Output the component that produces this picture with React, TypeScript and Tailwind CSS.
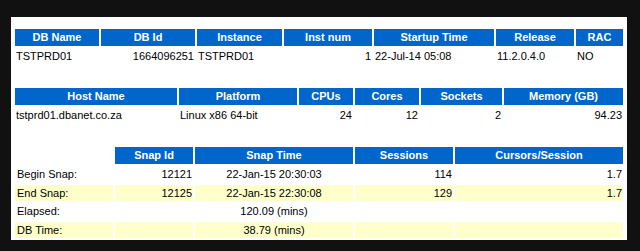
import React from 'react';

type Align = 'l' | 'r' | 'c';

const alignClass: Record<Align, string> = {
  l: 'justify-start pl-[1px]',
  r: 'justify-end pr-[1px]',
  c: 'justify-center',
};

// Blue AWR-style column heading
const Th = ({ children }: { children?: React.ReactNode }) => (
  <div className="flex items-center justify-center bg-[#0066cc] text-white font-bold pb-[1px] whitespace-nowrap">
    {children}
  </div>
);

const Td = ({ children, align = 'l', alt = false }: { children?: React.ReactNode; align?: Align; alt?: boolean }) => (
  <div className={`flex items-center whitespace-nowrap text-black ${alignClass[align]} ${alt ? 'bg-[#ffffcc]' : 'bg-white'}`}>
    {children}
  </div>
);

const snapRows = [
  { label: 'Begin Snap:', id: '12121', time: '22-Jan-15 20:30:03', sessions: '114', cursors: '1.7' },
  { label: 'End Snap:', id: '12125', time: '22-Jan-15 22:30:08', sessions: '129', cursors: '1.7' },
  { label: 'Elapsed:', id: '', time: '120.09 (mins)', sessions: '', cursors: '' },
  { label: 'DB Time:', id: '', time: '38.79 (mins)', sessions: '', cursors: '' },
];

export default function App() {
  return (
    <div className="w-[640px] h-[251px] bg-[#111111] pt-[17px] pl-[11px] overflow-hidden">
      <div className="w-[616px] h-[223px] bg-white pt-[12px] pl-[4px] font-['Liberation_Sans',Arial,sans-serif] text-[11px] leading-none">
        {/* Database */}
        <div className="grid grid-cols-[84px_94px_85px_88px_120px_78px_47px] grid-rows-[17px_17px] gap-[2px]">
          <Th>DB Name</Th>
          <Th>DB Id</Th>
          <Th>Instance</Th>
          <Th>Inst num</Th>
          <Th>Startup Time</Th>
          <Th>Release</Th>
          <Th>RAC</Th>
          <Td>TSTPRD01</Td>
          <Td align="r">1664096251</Td>
          <Td>TSTPRD01</Td>
          <Td align="r">1</Td>
          <Td>22-Jul-14 05:08</Td>
          <Td>11.2.0.4.0</Td>
          <Td>NO</Td>
        </div>

        {/* Host */}
        <div className="mt-[23px] grid grid-cols-[162px_118px_54px_64px_81px_119px] grid-rows-[17px_17px] gap-[2px]">
          <Th>Host Name</Th>
          <Th>Platform</Th>
          <Th>CPUs</Th>
          <Th>Cores</Th>
          <Th>Sockets</Th>
          <Th>Memory (GB)</Th>
          <Td>tstprd01.dbanet.co.za</Td>
          <Td>Linux x86 64-bit</Td>
          <Td align="r">24</Td>
          <Td align="r">12</Td>
          <Td align="r">2</Td>
          <Td align="r">94.23</Td>
        </div>

        {/* Snapshots */}
        <div className="mt-[23px] grid grid-cols-[98px_78px_158px_98px_168px] grid-rows-[17px_17px_16px_17px_16px] gap-[2px]">
          <div />
          <Th>Snap Id</Th>
          <Th>Snap Time</Th>
          <Th>Sessions</Th>
          <Th>Cursors/Session</Th>
          {snapRows.map((r, i) => {
            const alt = i % 2 === 1;
            return (
              <React.Fragment key={r.label}>
                <div className={`flex items-center pl-[2px] text-black ${alt ? 'bg-[#ffffcc]' : 'bg-white'}`}>{r.label}</div>
                <Td align="r" alt={alt}>{r.id}</Td>
                <Td align="c" alt={alt}>{r.time}</Td>
                <Td align="r" alt={alt}>{r.sessions}</Td>
                <Td align="r" alt={alt}>{r.cursors}</Td>
              </React.Fragment>
            );
          })}
        </div>
      </div>
    </div>
  );
}
